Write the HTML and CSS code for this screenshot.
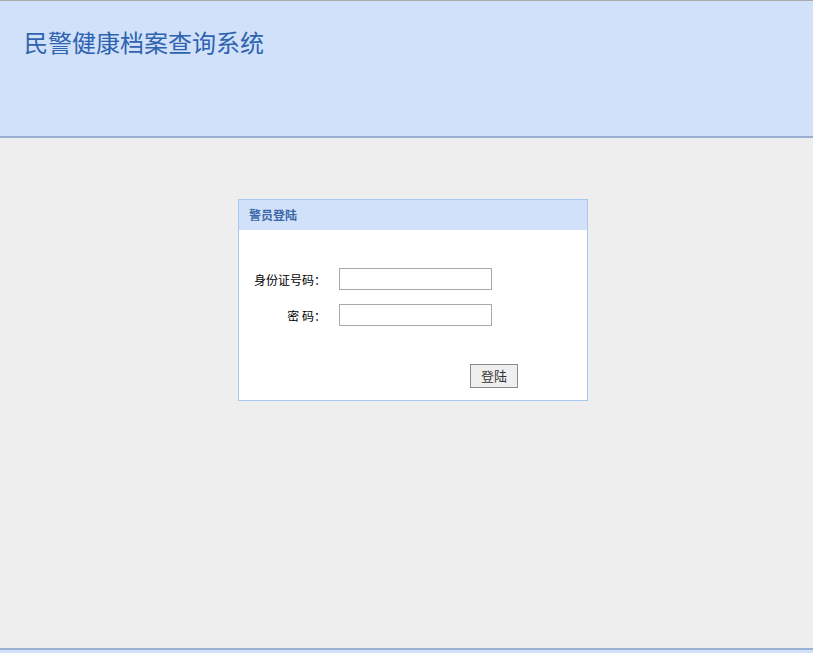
FILE: index.html
```html
<!DOCTYPE html>
<html lang="zh-CN">
<head>
<meta charset="utf-8">
<title>民警健康档案查询系统</title>
<link rel="stylesheet" href="styles.css">
</head>
<body>
<div class="page">
  <header class="top">
    <h1 class="sys-title">民警健康档案查询系统</h1>
  </header>
  <main class="main">
    <section class="login">
      <div class="login-head">警员登陆</div>
      <form class="login-body">
        <div class="row">
          <label class="lbl" for="idno">身份证号码：</label>
          <input class="txt" id="idno" type="text">
        </div>
        <div class="row">
          <label class="lbl" for="pwd">密 码：</label>
          <input class="txt" id="pwd" type="password">
        </div>
        <div class="actions">
          <button class="btn" type="button">登陆</button>
        </div>
      </form>
    </section>
  </main>
  <footer class="bottom"></footer>
</div>
</body>
</html>
```
FILE: styles.css
```css
html, body {
  margin: 0;
  padding: 0;
  height: 100%;
  background: #eeeeee;
  font-family: "Noto Sans CJK SC", "Liberation Sans", sans-serif;
}
.page {
  display: flex;
  flex-direction: column;
  height: 653px;
  overflow: hidden;
}
.top {
  flex: none;
  height: 135px;
  background: #d0e1f9;
  border-top: 1px solid #a9a9a9;
  border-bottom: 2px solid #9bb0d2;
  box-sizing: content-box;
}
.sys-title {
  margin: 0;
  padding: 25px 0 0 24px;
  font-size: 24px;
  line-height: 32px;
  font-weight: normal;
  color: #2f63b0;
  letter-spacing: 0;
}
.main {
  flex: none;
  height: 510px;
  padding-top: 61px;
  box-sizing: border-box;
}
.login {
  width: 348px;
  height: 200px;
  margin-left: 238px;
  border: 1px solid #a8c8ee;
  background: #ffffff;
  display: flex;
  flex-direction: column;
}
.login-head {
  height: 30px;
  line-height: 29px;
  background: #d0e1f9;
  padding-left: 10px;
  font-size: 12px;
  font-weight: bold;
  color: #3b68a8;
}
.login-body {
  margin: 0;
  padding: 38px 0 0 15px;
  display: flex;
  flex-direction: column;
  gap: 14px;
}
.row {
  display: flex;
  align-items: center;
  gap: 13px;
}
.lbl {
  width: 72px;
  text-align: right;
  font-size: 12px;
  color: #000;
  white-space: pre;
}
.txt {
  width: 153px;
  height: 22px;
  box-sizing: border-box;
  margin: 0;
  border: 1px solid #a9a9a9;
  background: #fff;
  padding: 1px 3px;
  font-size: 12px;
}
.actions {
  padding: 22px 0 0 216px;
}
.btn {
  width: 48px;
  height: 24px;
  box-sizing: border-box;
  margin: 0;
  padding: 0;
  border: 1px solid #8a8a8a;
  background: #efefef;
  font-family: "Noto Sans CJK SC", sans-serif;
  font-size: 13px;
  color: #333;
}
.bottom {
  flex: none;
  height: 3px;
  background: #d0e1f9;
  border-top: 2px solid #9bb0d2;
}
```
